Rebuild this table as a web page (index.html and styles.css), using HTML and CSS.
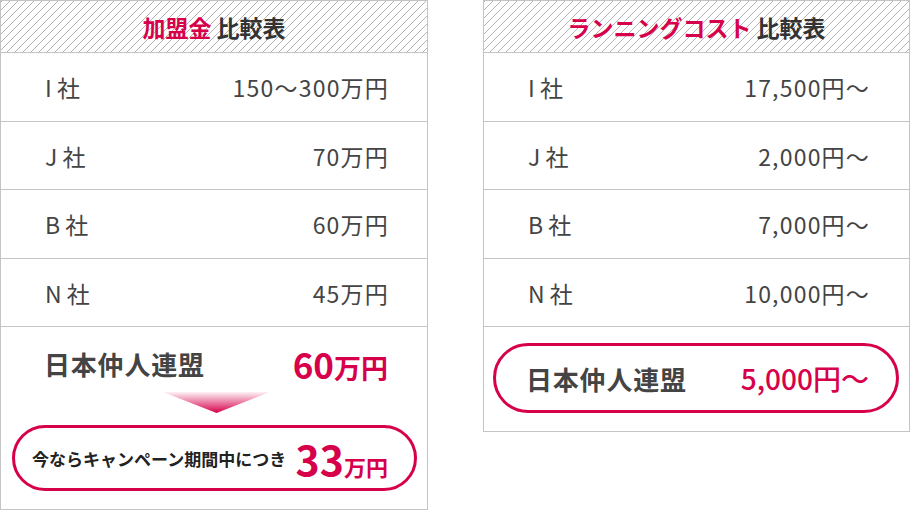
FILE: index.html
```html
<!DOCTYPE html>
<html lang="ja">
<head>
<meta charset="utf-8">
<title>比較表</title>
<link rel="stylesheet" href="styles.css">
</head>
<body>
<div class="wrap">
  <section class="table table-left">
    <div class="head"><span class="accent">加盟金</span> 比較表</div>
    <div class="row row-tall"><span class="co">I 社</span><span class="val">150〜300万円</span></div>
    <div class="row"><span class="co">J 社</span><span class="val">70万円</span></div>
    <div class="row row-tall"><span class="co">B 社</span><span class="val">60万円</span></div>
    <div class="row"><span class="co">N 社</span><span class="val">45万円</span></div>
    <div class="final final-left">
      <div class="total">
        <span class="name">日本仲人連盟</span>
        <span class="big"><span class="num">60</span><span class="unit">万円</span></span>
      </div>
      <div class="arrow"></div>
      <div class="pill pill-left">
        <span class="note">今ならキャンペーン期間中につき</span>
        <span class="big"><span class="num num-lg">33</span><span class="unit unit-sm">万円</span></span>
      </div>
    </div>
  </section>
  <section class="table table-right">
    <div class="head"><span class="accent">ランニングコスト</span> 比較表</div>
    <div class="row row-tall"><span class="co">I 社</span><span class="val">17,500円〜</span></div>
    <div class="row"><span class="co">J 社</span><span class="val">2,000円〜</span></div>
    <div class="row row-tall"><span class="co">B 社</span><span class="val">7,000円〜</span></div>
    <div class="row"><span class="co">N 社</span><span class="val">10,000円〜</span></div>
    <div class="final final-right">
      <div class="pill pill-right">
        <span class="name">日本仲人連盟</span>
        <span class="cost">5,000円〜</span>
      </div>
    </div>
  </section>
</div>
</body>
</html>
```
FILE: styles.css
```css
* { box-sizing: border-box; }
html, body { margin: 0; padding: 0; background: #fff; }
body {
  font-family: "Noto Sans CJK JP", "Noto Sans", sans-serif;
  color: #444;
}
.wrap {
  display: flex;
  align-items: flex-start;
  gap: 55px;
  width: 910px;
}
.table {
  border: 1px solid #c4c4c4;
  display: flex;
  flex-direction: column;
}
.table-left { width: 428px; }
.table-right { width: 427px; }
.head {
  height: 52px;
  border-bottom: 1px solid #c4c4c4;
  display: flex;
  align-items: center;
  justify-content: center;
  font-size: 23px;
  font-weight: 700;
  color: #333;
  white-space: pre;
  background: repeating-linear-gradient(135deg, #b4b4b4 0 1px, #fff 1px 5.66px);
}
.accent { color: #d7004b; }
.row {
  height: 68px;
  border-bottom: 1px solid #c4c4c4;
  display: flex;
  align-items: center;
  justify-content: space-between;
  padding: 0 38px 0 44px;
  font-size: 23px;
  color: #444;
}
.row-tall { height: 69px; }
.table-right .row { padding: 0 39px 0 44px; }
.co { white-space: pre; }
.val { letter-spacing: 1.2px; }
.final { display: flex; flex-direction: column; }
.final-left { height: 182px; padding-top: 16px; }
.final-right { height: 104px; padding: 16px 10px 0 9px; }
.total {
  height: 40px;
  display: flex;
  align-items: center;
  justify-content: space-between;
  padding: 0 39px 0 43px;
}
.name {
  font-size: 26px;
  font-weight: 700;
  color: #444;
  letter-spacing: 0.8px;
}
.big {
  color: #d7004b;
  font-weight: 700;
  display: flex;
  align-items: baseline;
}
.num { font-size: 35px; letter-spacing: 0; }
.unit { font-size: 27px; }
.num-lg { font-size: 41px; }
.unit-sm { font-size: 22px; }
.arrow {
  width: 107px;
  height: 21px;
  margin: 9px 0 0 162px;
  background: linear-gradient(to bottom, rgba(215,0,75,0.05), #d7004b);
  clip-path: polygon(0 0, 100% 0, 50% 100%);
}
.pill {
  border: 3px solid #d7004b;
  border-radius: 40px;
  display: flex;
  align-items: center;
  justify-content: space-between;
}
.pill-left {
  margin: 12px 10px 0 11px;
  height: 66px;
  padding: 0 26px 0 17px;
}
.note {
  font-size: 17px;
  font-weight: 700;
  color: #222;
}
.pill-right {
  height: 70px;
  padding: 0 27px 0 30px;
}
.cost {
  font-size: 28px;
  font-weight: 500;
  color: #d7004b;
}
```
